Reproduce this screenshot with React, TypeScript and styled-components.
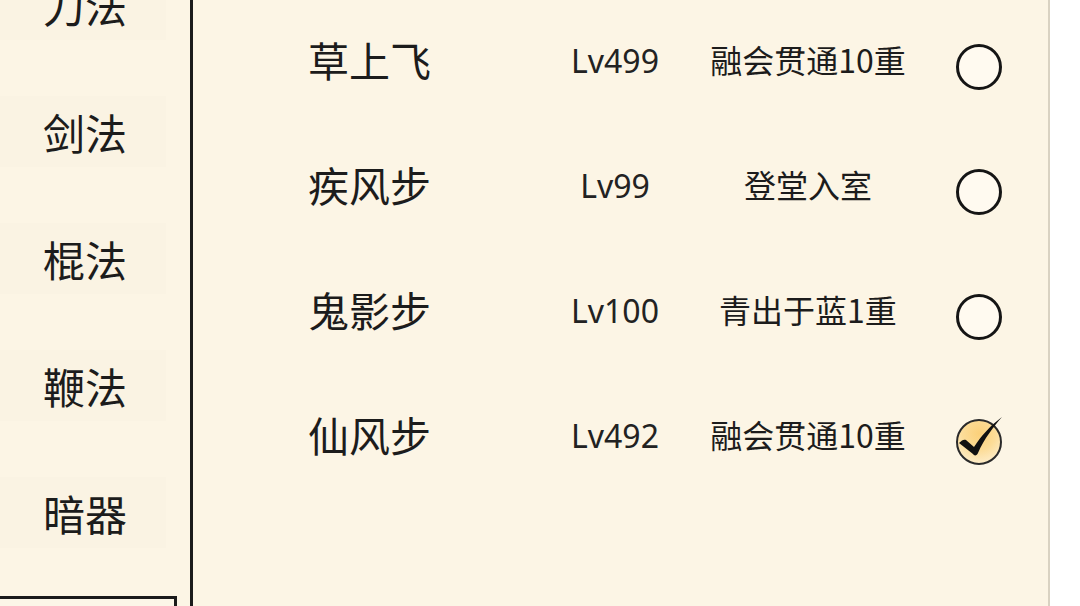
import React from "react";
import styled, { createGlobalStyle } from "styled-components";

const Global = createGlobalStyle`
  html, body { margin: 0; padding: 0; background: #ffffff; }
  body { width: 1080px; height: 606px; overflow: hidden; font-family: "Noto Sans", "Noto Sans CJK SC", sans-serif; }
`;

const Page = styled.div`
  display: flex;
  width: 1080px;
  height: 606px;
  overflow: hidden;
  background: #ffffff;
`;

const Sidebar = styled.div`
  width: 190px;
  flex: none;
  background: #fcf5e5;
  border-right: 3px solid #1b1b1b;
  overflow: hidden;
`;

const SideList = styled.div`
  display: flex;
  flex-direction: column;
  margin-top: -59px;
`;

const SideItem = styled.div`
  height: 127px;
  display: flex;
  align-items: center;
  padding-left: 43px;
  font-family: "Noto Sans CJK SC", sans-serif;
  font-size: 42px;
  line-height: 1;
  color: #1c1c1c;
  box-sizing: border-box;
  margin-right: 24px;
  background: linear-gradient(#fcf5e5 0 22%, #faf3e3 22% 78%, #fcf5e5 78%);
`;

const BottomButton = styled.div`
  margin-top: 20px;
  width: 177px;
  height: 40px;
  border-top: 3px solid #1b1b1b;
  border-right: 3px solid #1b1b1b;
  box-sizing: border-box;
  background: #fcf6e8;
`;

const Panel = styled.div`
  width: 857px;
  flex: none;
  background: #fcf5e5;
  border-right: 2px solid #d9d2c2;
  box-sizing: border-box;
  padding-left: 115px;
`;

const Row = styled.div`
  display: grid;
  grid-template-columns: 212px 190px 196px 145px;
  align-items: center;
  height: 125px;
`;

const Name = styled.div`
  font-family: "Noto Sans CJK SC", sans-serif;
  font-size: 41px;
  line-height: 1;
  color: #1c1c1c;
  margin-top: -6px;
`;

const Level = styled.div`
  font-family: "Noto Sans", "Noto Sans CJK SC", sans-serif;
  font-size: 32px;
  line-height: 1;
  color: #222;
  text-align: center;
  margin-top: -4px;
`;

const Rank = styled.div`
  font-family: "Noto Sans CJK SC", sans-serif;
  font-size: 32px;
  line-height: 1;
  color: #1c1c1c;
  text-align: center;
  white-space: nowrap;
  margin-top: -8px;
`;

const Radio = styled.div<{ $checked: boolean }>`
  justify-self: center;
  position: relative;
  width: 46px;
  height: 46px;
  border-radius: 50%;
  box-sizing: border-box;
  margin-top: 8px;
  border: ${(p) => (p.$checked ? "2px solid #2a2a2a" : "3px solid #151515")};
  background: ${(p) =>
    p.$checked
      ? "radial-gradient(circle at 50% 30%, #fbd07a 0%, #fcdc97 45%, #fdebc4 80%)"
      : "#fffaf0"};
`;

const Check = styled.svg`
  position: absolute;
  left: -2px;
  top: -2px;
  width: 46px;
  height: 46px;
  overflow: visible;
`;

const skills = [
  { name: "草上飞", lv: "Lv499", rank: "融会贯通10重", checked: false },
  { name: "疾风步", lv: "Lv99", rank: "登堂入室", checked: false },
  { name: "鬼影步", lv: "Lv100", rank: "青出于蓝1重", checked: false },
  { name: "仙风步", lv: "Lv492", rank: "融会贯通10重", checked: true },
];

const categories = ["刀法", "剑法", "棍法", "鞭法", "暗器"];

export default function App() {
  return (
    <>
      <Global />
      <Page>
        <Sidebar>
          <SideList>
            {categories.map((c) => (
              <SideItem key={c}>{c}</SideItem>
            ))}
            <BottomButton />
          </SideList>
        </Sidebar>
        <Panel>
          {skills.map((s) => (
            <Row key={s.name}>
              <Name>{s.name}</Name>
              <Level>{s.lv}</Level>
              <Rank>{s.rank}</Rank>
              <Radio $checked={s.checked}>
                {s.checked && (
                  <Check viewBox="0 0 46 46">
                    <path
                      d="M3,24 C6,21 8,20 10,21 L18,28 C25,17 35,6 46,-2 C38,7 28,20 22,34 C21,37 18,37 17,35 Z"
                      fill="#111"
                    />
                  </Check>
                )}
              </Radio>
            </Row>
          ))}
        </Panel>
      </Page>
    </>
  );
}
